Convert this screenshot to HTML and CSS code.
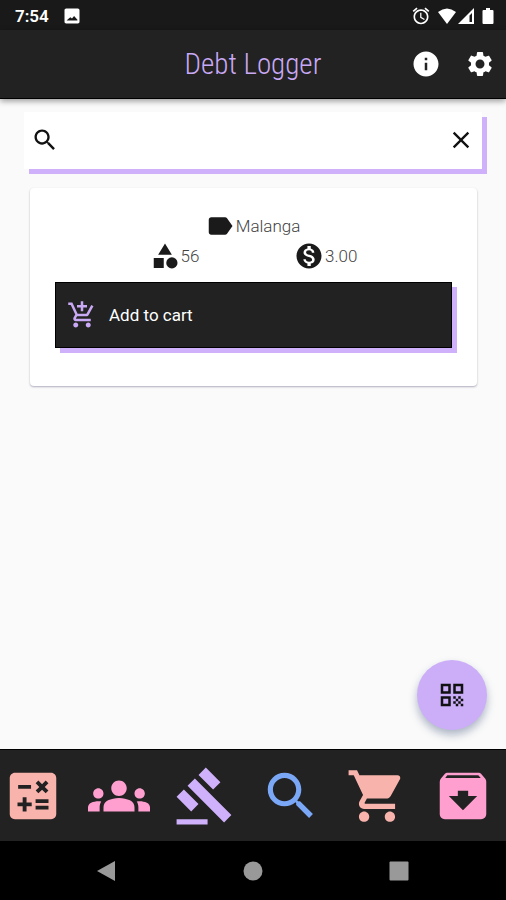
FILE: index.html
```html
<!DOCTYPE html>
<html lang="en">
<head>
<meta charset="utf-8">
<meta name="viewport" content="width=device-width, initial-scale=1">
<title>Debt Logger</title>
<link rel="stylesheet" href="styles.css">
</head>
<body>
<div class="status">
  <span class="clock">7:54</span>
  <svg class="status-icon photo" viewBox="0 0 24 24" aria-hidden="true"><path d="M21 19V5c0-1.100-.9-2-2-2H5c-1.100 0-2 .9-2 2v14c0 1.100.9 2 2 2h14c1.100 0 2-.9 2-2zM7.500 15.500l2.500-2 2 1.500 2.500-3 4 4.500v1H5.500z"/></svg>
  <div class="signals">
    <svg class="status-icon" viewBox="0 0 24 24" aria-hidden="true"><path d="M22 5.720l-4.600-3.860-1.290 1.530 4.600 3.860L22 5.720zM7.880 3.390L6.600 1.860 2 5.710l1.290 1.530 4.590-3.850zM12.500 8H11v6l4.750 2.850.75-1.230-4-2.370V8zM12 4c-4.970 0-9 4.030-9 9s4.020 9 9 9c4.970 0 9-4.030 9-9s-4.030-9-9-9zm0 16c-3.870 0-7-3.130-7-7s3.130-7 7-7 7 3.130 7 7-3.130 7-7 7z"/></svg>
    <svg class="wifi" viewBox="0 0 20 16" aria-hidden="true"><path d="M1 4Q10-3 19 4L10 16z"/></svg>
    <svg class="cell" viewBox="0 0 18 18" aria-hidden="true"><path fill-rule="evenodd" d="M17 1v16H1zM12.500 8.500v6.500h2.500V6z"/></svg>
    <svg class="battery" viewBox="0 0 12 18" aria-hidden="true"><path d="M4 1h4v2h2.500q1 0 1 1v12q0 1-1 1h-9q-1 0-1-1V4q0-1 1-1H4z"/></svg>
  </div>
</div>

<header class="appbar">
  <h1>Debt Logger</h1>
  <div class="actions">
    <button type="button" aria-label="Info"><svg class="icon" viewBox="0 0 24 24"><path d="M12 2C6.480 2 2 6.480 2 12s4.480 10 10 10 10-4.480 10-10S17.520 2 12 2zm1 15h-2v-6h2v6zm0-8h-2V7h2v2z"/></svg></button>
    <button type="button" aria-label="Settings"><svg class="icon" viewBox="0 0 24 24"><path d="M19.140 12.940c.04-.3.06-.61.06-.94 0-.32-.02-.64-.07-.94l2.030-1.580c.18-.14.23-.41.12-.61l-1.920-3.320c-.12-.22-.37-.29-.59-.22l-2.390.96c-.5-.38-1.030-.7-1.620-.94l-.36-2.540c-.04-.24-.24-.41-.48-.41h-3.840c-.24 0-.43.17-.47.41l-.36 2.540c-.59.24-1.130.57-1.620.94l-2.390-.96c-.22-.08-.47 0-.59.22L2.740 8.870c-.12.21-.08.47.12.61l2.030 1.580c-.05.3-.09.63-.09.94s.02.64.07.94l-2.030 1.580c-.18.14-.23.41-.12.61l1.920 3.320c.12.22.37.29.59.22l2.390-.96c.5.38 1.030.7 1.620.94l.36 2.540c.05.24.24.41.48.41h3.840c.24 0 .44-.17.47-.41l.36-2.540c.59-.24 1.130-.56 1.620-.94l2.390.96c.22.08.47 0 .59-.22l1.920-3.320c.12-.22.07-.47-.12-.61l-2.010-1.580zM12 15.600c-1.980 0-3.600-1.620-3.600-3.600s1.620-3.600 3.600-3.600 3.600 1.620 3.600 3.600-1.620 3.600-3.600 3.600z"/></svg></button>
  </div>
</header>

<main>
  <form class="search">
    <label for="query" aria-label="Search items"><svg class="icon" viewBox="0 0 24 24"><path d="M15.500 14h-.79l-.28-.27C15.410 12.590 16 11.110 16 9.500 16 5.910 13.090 3 9.500 3S3 5.910 3 9.500 5.910 16 9.500 16c1.610 0 3.090-.59 4.230-1.570l.27.28v.79l5 4.990L20.490 19l-4.990-5zm-6 0C7.010 14 5 11.990 5 9.500S7.010 5 9.500 5 14 7.010 14 9.500 11.990 14 9.500 14z"/></svg></label>
    <input id="query" type="text">
    <button type="reset" aria-label="Clear"><svg class="icon" viewBox="0 0 24 24"><path d="M19 6.410L17.590 5 12 10.590 6.410 5 5 6.410 10.590 12 5 17.590 6.410 19 12 13.410 17.590 19 19 17.590 13.410 12z"/></svg></button>
  </form>

  <article class="card">
    <div class="row name"><span class="fact"><svg class="icon" viewBox="0 0 24 24" aria-hidden="true"><path d="M17.630 5.840C17.270 5.330 16.670 5 16 5L5 5.010C3.900 5.010 3 5.900 3 7v10c0 1.100.9 1.990 2 1.990L16 19c.67 0 1.270-.33 1.630-.84L22 12l-4.370-6.160z"/></svg>Malanga</span></div>
    <div class="row">
      <span class="fact"><svg class="icon" viewBox="0 0 24 24" aria-hidden="true"><path d="M12 2l-5.500 9h11zM3 13.500h8v8H3z"/><circle cx="17.500" cy="17.500" r="4.500"/></svg>56</span>
      <span class="fact"><svg class="icon" viewBox="0 0 24 24" aria-hidden="true"><path d="M12 2C6.480 2 2 6.480 2 12s4.480 10 10 10 10-4.480 10-10S17.520 2 12 2zm1.410 16.090V20h-2.670v-1.930c-1.710-.36-3.160-1.460-3.270-3.400h1.960c.1 1.050.82 1.870 2.650 1.870 1.960 0 2.400-.98 2.400-1.590 0-.83-.44-1.610-2.670-2.140-2.480-.6-4.180-1.620-4.180-3.670 0-1.720 1.390-2.840 3.110-3.210V4h2.670v1.950c1.860.45 2.790 1.860 2.850 3.390H14.300c-.05-1.110-.64-1.870-2.220-1.870-1.500 0-2.400.68-2.400 1.640 0 .84.65 1.390 2.670 1.910s4.180 1.390 4.180 3.910c-.01 1.830-1.380 2.830-3.120 3.160z"/></svg>3.00</span>
    </div>
    <button class="add" type="button"><svg class="icon" viewBox="0 0 24 24" aria-hidden="true"><path d="M11 9h2V6h3V4h-3V1h-2v3H8v2h3v3zm-4 9c-1.100 0-1.990.9-1.990 2S5.900 22 7 22s2-.9 2-2-.9-2-2-2zm10 0c-1.100 0-1.990.9-1.990 2s.89 2 1.990 2 2-.9 2-2-.9-2-2-2zm-9.830-3.250l.03-.12.9-1.630h7.450c.75 0 1.410-.41 1.750-1.030l3.860-7.010L19.420 4h-.01l-1.100 2-2.760 5H8.530l-.13-.27L6.160 6l-.95-2-.94-2H1v2h2l3.600 7.590-1.350 2.450c-.16.28-.25.61-.25.96 0 1.100.9 2 2 2h12v-2H7.420c-.13 0-.25-.11-.25-.25z"/></svg>Add to cart</button>
  </article>

  <button class="fab" type="button" aria-label="Scan code"><svg class="icon" viewBox="0 0 24 24"><path fill-rule="evenodd" d="M3 11h8V3H3zM5 5h4v4H5zM3 21h8v-8H3zM5 15h4v4H5zM13 3v8h8V3zM19 9h-4V5h4z"/><path d="M19 19h2v2h-2zM13 13h2v2h-2zM15 15h2v2h-2zM13 17h2v2h-2zM15 19h2v2h-2zM17 17h2v2h-2zM17 13h2v2h-2zM19 15h2v2h-2z"/></svg></button>
</main>

<nav class="tabs">
  <a class="peach" href="#calculator" aria-label="Calculator"><svg viewBox="0 0 24 24"><path d="M19 3H5c-1.100 0-2 .9-2 2v14c0 1.100.9 2 2 2h14c1.100 0 2-.9 2-2V5c0-1.100-.9-2-2-2zm-5.970 4.060L14.090 6l1.410 1.410L16.910 6l1.060 1.060-1.410 1.410 1.410 1.410-1.060 1.060-1.410-1.400-1.410 1.410-1.060-1.060 1.410-1.410-1.410-1.420zm-6.780.66h5v1.500h-5v-1.500zM11.500 16h-2v2H8v-2H6v-1.500h2v-2h1.500v2h2V16zm6.500 1.250h-5v-1.500h5v1.500zm0-2.500h-5v-1.500h5v1.500z"/></svg></a>
  <a class="pink" href="#people" aria-label="People"><svg viewBox="0 0 24 24"><path d="M12 12.750c1.630 0 3.070.39 4.240.9 1.080.48 1.760 1.560 1.760 2.730V18H6v-1.610c0-1.180.68-2.260 1.760-2.730 1.170-.52 2.610-.91 4.240-.91zM4 13c1.100 0 2-.9 2-2s-.9-2-2-2-2 .9-2 2 .9 2 2 2zm1.130 1.100c-.37-.06-.74-.1-1.130-.1-.99 0-1.930.21-2.780.58C.48 14.900 0 15.620 0 16.430V18h4.500v-1.610c0-.83.23-1.610.63-2.290zM20 13c1.100 0 2-.9 2-2s-.9-2-2-2-2 .9-2 2 .9 2 2 2zm4 3.430c0-.81-.48-1.530-1.220-1.850-.85-.37-1.790-.58-2.780-.58-.39 0-.76.04-1.130.1.4.68.63 1.460.63 2.290V18H24v-1.570zM12 6c1.660 0 3 1.340 3 3s-1.340 3-3 3-3-1.340-3-3 1.340-3 3-3z"/></svg></a>
  <a class="lilac" href="#debts" aria-label="Debts"><svg viewBox="0 0 24 24"><path d="M1 21h12v2H1zM5.245 8.070l2.830-2.827 14.140 14.142-2.828 2.828zM12.317 1l5.657 5.656-2.830 2.830-5.654-5.660zM3.825 9.485l5.657 5.657-2.828 2.828-5.657-5.657z"/></svg></a>
  <a class="blue" href="#search" aria-label="Search"><svg viewBox="0 0 24 24"><path d="M15.500 14h-.79l-.28-.27C15.410 12.590 16 11.110 16 9.500 16 5.910 13.090 3 9.500 3S3 5.910 3 9.500 5.910 16 9.500 16c1.610 0 3.090-.59 4.230-1.570l.27.28v.79l5 4.990L20.490 19l-4.990-5zm-6 0C7.010 14 5 11.990 5 9.500S7.010 5 9.500 5 14 7.010 14 9.500 11.990 14 9.500 14z"/></svg></a>
  <a class="peach" href="#cart" aria-label="Cart"><svg viewBox="0 0 24 24"><path d="M7 18c-1.100 0-1.990.9-1.990 2S5.900 22 7 22s2-.9 2-2-.9-2-2-2zM1 2v2h2l3.600 7.590-1.350 2.450c-.16.28-.25.61-.25.96 0 1.100.9 2 2 2h12v-2H7.420c-.14 0-.25-.11-.25-.25l.03-.12.9-1.630h7.450c.75 0 1.410-.41 1.750-1.030l3.580-6.490c.08-.14.12-.31.12-.48 0-.55-.45-1-1-1H5.210l-.94-2H1zm16 16c-1.100 0-1.990.9-1.990 2s.89 2 1.990 2 2-.9 2-2-.9-2-2-2z"/></svg></a>
  <a class="pink" href="#archive" aria-label="Archive"><svg viewBox="0 0 24 24"><path d="M20.540 5.230l-1.390-1.680C18.880 3.210 18.470 3 18 3H6c-.47 0-.88.21-1.160.55L3.460 5.230C3.170 5.570 3 6.020 3 6.500V19c0 1.100.9 2 2 2h14c1.100 0 2-.9 2-2V6.500c0-.48-.17-.93-.46-1.270zM12 17.500L6.500 12H10v-2h4v2h3.500L12 17.500zM5.120 5l.81-1h12l.94 1H5.120z"/></svg></a>
</nav>

<div class="system">
  <button type="button" aria-label="Back"><svg viewBox="0 0 20 22"><path d="M18 1v20L0 11z"/></svg></button>
  <button type="button" aria-label="Home"><svg viewBox="0 0 20 22"><circle cx="10" cy="11" r="9.500"/></svg></button>
  <button type="button" aria-label="Overview"><svg viewBox="0 0 20 22"><rect x="0.500" y="1.500" width="19" height="19" rx="1"/></svg></button>
</div>
</body>
</html>
```
FILE: styles.css
```css
* { box-sizing: border-box; }

body {
  margin: 0;
  min-height: 100vh;
  display: flex;
  flex-direction: column;
  background: #fafafa;
  color: #222;
  font-family: Roboto, sans-serif;
  font-size: 17px;
}

button {
  border: 0;
  padding: 0;
  background: none;
  color: inherit;
  font: inherit;
}

svg { display: block; fill: currentColor; }
.icon { width: 30px; height: 30px; }

.status {
  display: flex;
  align-items: center;
  height: 30px;
  padding: 2px 12px 0 15px;
  background: #191919;
  color: #fff;
}
.clock { font-size: 17px; font-weight: 600; }
.status-icon { width: 20px; height: 20px; }
.photo { margin-left: 13px; }
.signals { display: flex; align-items: center; margin-left: auto; }
.wifi { width: 20px; height: 16px; margin-left: 6px; }
.cell { width: 18px; height: 18px; }
.battery { width: 12px; height: 18px; margin-left: 7px; }

.appbar {
  display: grid;
  grid-template-columns: 1fr auto 1fr;
  align-items: center;
  height: 69px;
  padding: 0 11px;
  background: #222;
  border-bottom: 1px solid #000;
  box-shadow: 0 2px 6px rgba(0, 0, 0, 0.4);
  color: #fff;
}
h1 {
  grid-column: 2;
  margin: 0;
  color: #c9a9f5;
  font-family: "Roboto Condensed", "Liberation Sans Narrow", Roboto, sans-serif;
  font-size: 29px;
  font-weight: 300;
}
.actions { display: flex; align-items: center; justify-content: flex-end; gap: 24px; }

main { position: relative; flex: 1; padding: 13px 24px 0; }

.search {
  display: flex;
  align-items: center;
  height: 57px;
  padding: 0 7px 2px;
  background: #fff;
  box-shadow: 5px 5px 0 #cfb0fa;
  color: #111;
}
.search .icon { width: 28px; height: 28px; }
.search input {
  flex: 1;
  min-width: 0;
  height: 40px;
  border: 0;
  outline: 0;
  background: none;
  font: inherit;
}

.card {
  margin: 19px 5px 0 6px;
  padding: 23px 25px 38px;
  background: #fff;
  border-radius: 4px;
  box-shadow: 0 1px 2px rgba(40, 30, 80, 0.35);
}
.row { display: flex; justify-content: space-evenly; }
.fact {
  display: flex;
  align-items: center;
  gap: 1px;
  height: 30px;
  color: #444;
  font-weight: 300;
}
.name { padding-right: 2px; }
.fact svg { color: #1a1a1a; }

.add {
  display: flex;
  align-items: center;
  gap: 12px;
  width: 100%;
  height: 66px;
  margin-top: 11px;
  padding: 0 11px;
  border: 1px solid #000;
  background: #222;
  box-shadow: 5px 5px 0 #cfb0fa;
  color: #fff;
}
.add svg { color: #c9a9f5; }

.fab {
  position: absolute;
  right: 19px;
  bottom: 19px;
  display: grid;
  place-items: center;
  width: 70px;
  height: 70px;
  border-radius: 50%;
  background: #cbadf8;
  box-shadow: 0 5px 8px rgba(60, 80, 120, 0.4);
  color: #111;
}

.tabs {
  display: flex;
  align-items: center;
  justify-content: space-between;
  height: 92px;
  padding: 0 12px 0 2px;
  background: #222;
  border-top: 1px solid #000;
}
.tabs svg { width: 62px; height: 62px; }
.peach { color: #f8b4ac; }
.pink { color: #ff9fd0; }
.lilac { color: #cfb0fa; }
.blue { color: #7ba7f7; }

.system {
  display: grid;
  grid-template-columns: repeat(3, 1fr);
  place-items: center;
  height: 59px;
  padding: 0 34px;
  background: #000;
  color: #999;
}
.system svg { width: 20px; height: 22px; }
```
